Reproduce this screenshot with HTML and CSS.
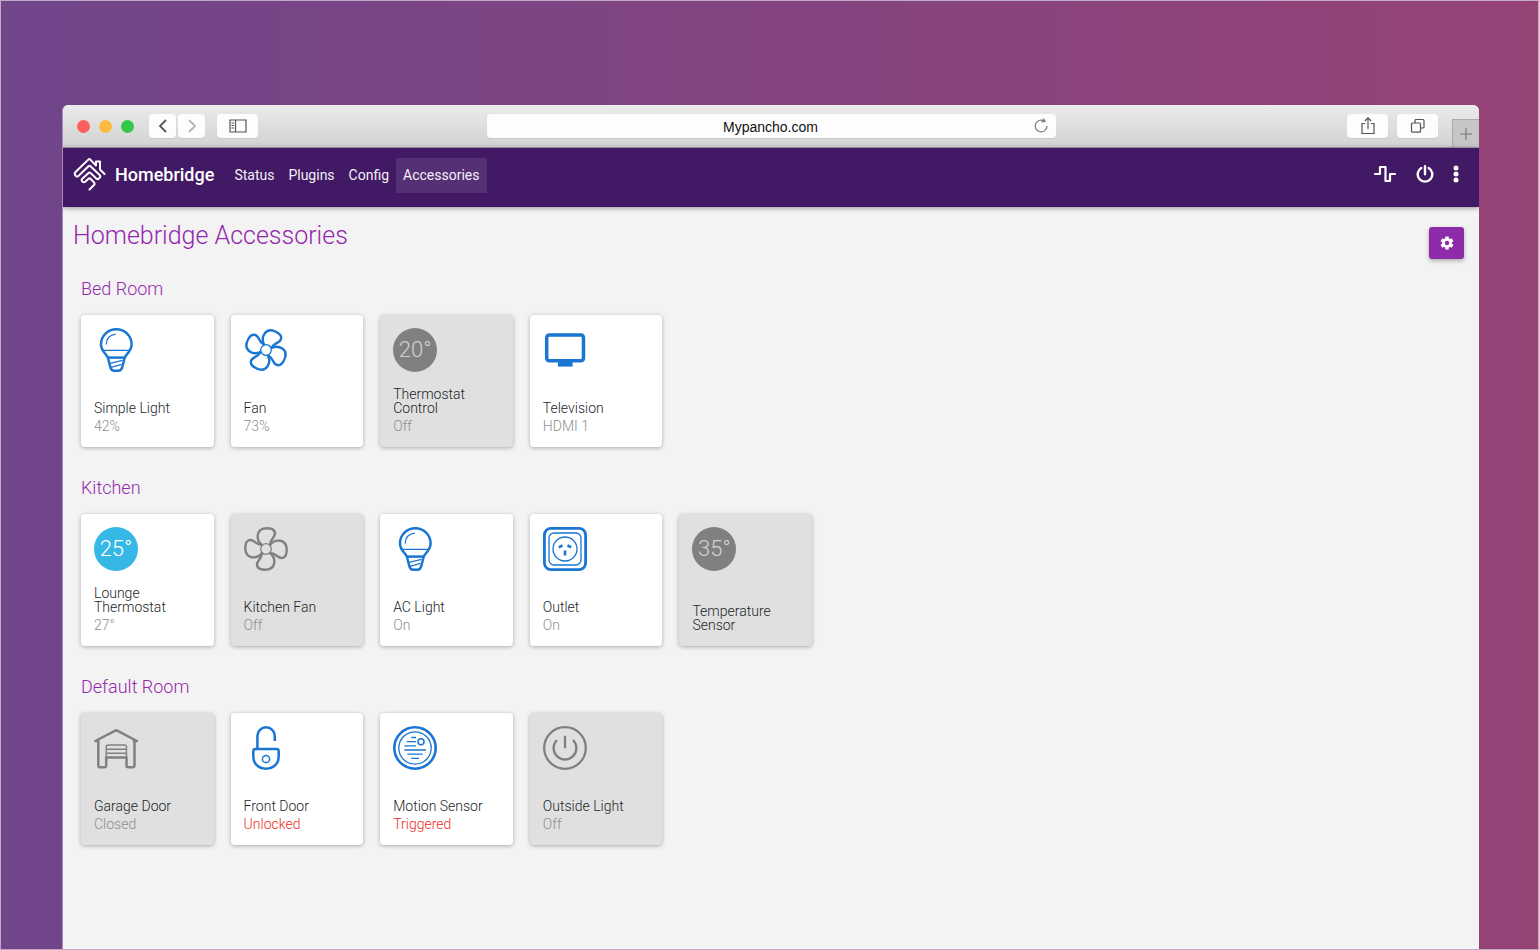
FILE: index.html
```html
<!DOCTYPE html>
<html lang="en">
<head>
<meta charset="utf-8">
<meta name="viewport" content="width=device-width, initial-scale=1">
<title>Homebridge Accessories</title>
<link rel="stylesheet" href="styles.css">
</head>
<body>
<svg class="defs" aria-hidden="true">
  <symbol id="bulb" viewBox="0 0 44 44"><g fill="none" stroke="currentColor" stroke-width="2.500" stroke-linejoin="round"><path d="M13.800 29.300C11.500 25 7 22.500 7 16.400a15.300 15.200 0 0 1 30.600 0c0 6.100-4.500 8.600-6.800 12.900L28.300 39q-.8 3.700-4 3.700h-4q-3.200 0-4-3.700z"/><path d="M14 29.600h16.600"/><path d="M7.500 22.300h29.500M12.300 16.500c0-5.500 3.500-9.500 9.500-10.300M16 35.300l12.500-3M17 39.300l10.500-3" stroke-width="1.300"/></g></symbol>
  <symbol id="fan" viewBox="0 0 44 44"><g fill="none" stroke="currentColor" stroke-width="2.400"><path id="blade" d="M18.300 18.200C11.500 13 11.500 1.300 23 1.300C31.500 1.300 32.500 6.500 29.300 10.500C27 13.300 26.200 14.500 25.900 18"/><use href="#blade" transform="rotate(90 22 22)"/><use href="#blade" transform="rotate(180 22 22)"/><use href="#blade" transform="rotate(270 22 22)"/><circle cx="22" cy="22" r="5.300" stroke-width="1.300"/></g></symbol>
  <symbol id="tv" viewBox="0 0 44 44"><rect x="3.700" y="7" width="36.800" height="25.800" rx="2.500" fill="none" stroke="currentColor" stroke-width="3.500"/><path d="M15 33h14.600v5.600H15z" fill="currentColor"/></symbol>
  <symbol id="outlet" viewBox="0 0 44 44"><g fill="none" stroke="currentColor" stroke-width="1.300"><rect x="1.400" y="1.400" width="41.200" height="41.200" rx="6.500" stroke-width="2.800"/><rect x="6" y="6" width="32" height="32" rx="5"/><circle cx="22" cy="22" r="12"/><path d="M15.800 20.300l3.700-2M28.200 20.300l-3.700-2M22 23.500v5" stroke-width="2.600"/></g></symbol>
  <symbol id="garage" viewBox="0 0 44 44"><g fill="none" stroke="currentColor" stroke-width="2.500" stroke-linejoin="round" stroke-linecap="round"><path d="M1.300 15L22.300 4.200l20.600 10.800M1.300 15h3M42.900 15h-3M4.300 15v24.500q0 1.800 1.800 1.800h4.200q1.900 0 1.900-1.800V31.500h20.300v8q0 1.800 1.800 1.800h4.400q1.800 0 1.800-1.800V15"/><path d="M12.200 31v-10q0-2 2-2h16.300q2 0 2 2v10M12.500 23.200h20M12.500 27.200h20" stroke-width="1.400"/></g></symbol>
  <symbol id="lock" viewBox="0 0 44 44"><g fill="none" stroke="currentColor" stroke-width="2.500" stroke-linejoin="round"><path d="M13.400 23V10a8.700 8.700 0 0 1 17.400 0v5"/><path d="M11.500 23h21q2.200 0 2.200 2.200v5.300c0 7-5 12.200-12.700 12.200S9.300 37.500 9.300 30.500v-5.300q0-2.200 2.200-2.200z"/><circle cx="22" cy="33" r="3.600" stroke-width="1.500"/></g></symbol>
  <symbol id="motion" viewBox="0 0 44 44"><g fill="none" stroke="currentColor" stroke-width="1.300"><circle cx="22" cy="22" r="20.700" stroke-width="2.600"/><circle cx="22" cy="22" r="16.200"/><circle cx="28" cy="15.800" r="3" stroke-width="1.500"/><path d="M18.300 11.500h4.700M13.700 15.700H23M11.300 19.800H23M11.300 24h21.700M14.300 28.200h15.400M18.300 32.400h7.700"/></g></symbol>
  <symbol id="power" viewBox="0 0 44 44"><g fill="none" stroke="currentColor" stroke-width="2.300"><circle cx="22" cy="22" r="20.800"/><path d="M22 9.700v12.500M14 14a11.400 11.400 0 1 0 16 0"/></g></symbol>
</svg>

<div class="window">
  <header class="chrome">
    <div class="chrome-side">
      <div class="lights"><i class="light red"></i><i class="light amber"></i><i class="light green"></i></div>
      <div class="history">
        <button class="tool narrow" aria-label="Back"><svg width="14" height="16" viewBox="0 0 14 16"><path d="M10 2L4 8l6 6" fill="none" stroke="#555" stroke-width="1.800"/></svg></button>
        <button class="tool narrow" aria-label="Forward"><svg width="14" height="16" viewBox="0 0 14 16"><path d="M4 2l6 6-6 6" fill="none" stroke="#b4b4b4" stroke-width="1.800"/></svg></button>
      </div>
      <button class="tool" aria-label="Sidebar"><svg width="18" height="14" viewBox="0 0 18 14"><path d="M1 1h16v12H1zM6.500 1v12M2.500 4h2.500M2.500 6.500h2.500M2.500 9h2.500" fill="none" stroke="#555" stroke-width="1.200"/></svg></button>
    </div>
    <div class="address">
      <input class="address-input" type="text" value="Mypancho.com" aria-label="Address">
      <button class="reload" aria-label="Reload"><svg width="16" height="16" viewBox="0 0 16 16"><path d="M11.800 3.400A5.900 5.900 0 1 0 14 8M8.500 3.800l3.500-.3L10.500.5" fill="none" stroke="#777" stroke-width="1.200"/></svg></button>
    </div>
    <div class="chrome-side end">
      <button class="tool" aria-label="Share"><svg width="16" height="20" viewBox="0 0 16 20"><path d="M5 7.500H2v10h12v-10h-3M8 13V2M4.800 5L8 1.800 11.200 5" fill="none" stroke="#555" stroke-width="1.200"/></svg></button>
      <button class="tool" aria-label="Tabs"><svg width="16" height="16" viewBox="0 0 16 16"><path d="M5 5V2.500q0-1 1-1h7q1 0 1 1v6.500q0 1-1 1h-2M2.500 5h7q1 0 1 1v7.200q0 1-1 1h-7q-1 0-1-1V6q0-1 1-1z" fill="none" stroke="#555" stroke-width="1.200"/></svg></button>
      <button class="new-tab" aria-label="New tab"><svg width="14" height="14" viewBox="0 0 14 14"><path d="M7 1v12M1 7h12" stroke="#777" stroke-width="1.200"/></svg></button>
    </div>
  </header>

  <nav class="navbar">
    <a class="brand" href="#"><svg width="34" height="34" viewBox="0 0 34 34" aria-hidden="true"><path d="M31.500 17L27 12.500V4.500h-4v4L17.300 2.600q-1-1-2 0L2.300 15.300q-1.300 1.500 0 3l.6.6q1.300 1.200 2.600 0L15.500 9.200q1-.9 2 0l9.200 8.800q1.200 1.300 0 2.600l-.8.9q-1.300 1.200-2.600 0l-5.800-5.600q-1-.9-2 0l-6.200 5.800q-1.200 1.300-.2 2.500l.6.600q1.200 1 2.500 0l3.300-3q1-.9 2 0l3.500 3.600q1.200 1.300 0 2.600L16.500 32.500" fill="none" stroke="#fff" stroke-width="2" stroke-linecap="round" stroke-linejoin="round"/></svg>Homebridge</a>
    <div class="links">
      <a class="link" href="#">Status</a>
      <a class="link" href="#">Plugins</a>
      <a class="link" href="#">Config</a>
      <a class="link active" href="#" aria-current="page">Accessories</a>
    </div>
    <div class="nav-actions">
      <a href="#" aria-label="Logs"><svg width="24" height="18" viewBox="0 0 24 18"><path d="M2 9H7V2H12.500V16H17V9h5" fill="none" stroke="#fff" stroke-width="2.200" stroke-linecap="round" stroke-linejoin="round"/></svg></a>
      <a href="#" aria-label="Restart"><svg width="18" height="18" viewBox="0 0 18 18"><path d="M9 1.200v8M5.300 3A7.300 7.300 0 1 0 12.700 3" fill="none" stroke="#fff" stroke-width="2.400" stroke-linecap="round"/></svg></a>
      <a href="#" aria-label="Menu"><svg width="6" height="18" viewBox="0 0 6 18" fill="#fff"><circle cx="3" cy="3" r="2.500"/><circle cx="3" cy="9" r="2.500"/><circle cx="3" cy="15" r="2.500"/></svg></a>
    </div>
  </nav>

  <main class="content">
    <div class="heading">
      <h1>Homebridge Accessories</h1>
      <button class="settings" aria-label="Settings"><svg width="14" height="14" viewBox="0 0 14 14"><g stroke="#fff" stroke-width="3.400"><path d="M7 .5v13M1.400 3.750l11.200 6.500M1.400 10.250l11.200-6.500"/></g><circle cx="7" cy="7" r="4.900" fill="#fff"/><circle cx="7" cy="7" r="2.200" fill="#8e2ba8"/></svg></button>
    </div>

    <section class="room">
      <h2>Bed Room</h2>
      <div class="cards">
        <article class="card"><svg class="icon"><use href="#bulb"/></svg><div><h3>Simple Light</h3><p>42%</p></div></article>
        <article class="card"><svg class="icon spun"><use href="#fan"/></svg><div><h3>Fan</h3><p>73%</p></div></article>
        <article class="card off"><span class="temp">20°</span><div><h3>Thermostat Control</h3><p>Off</p></div></article>
        <article class="card"><svg class="icon"><use href="#tv"/></svg><div><h3>Television</h3><p>HDMI 1</p></div></article>
      </div>
    </section>

    <section class="room">
      <h2>Kitchen</h2>
      <div class="cards">
        <article class="card"><span class="temp">25°</span><div><h3>Lounge Thermostat</h3><p>27°</p></div></article>
        <article class="card off"><svg class="icon"><use href="#fan"/></svg><div><h3>Kitchen Fan</h3><p>Off</p></div></article>
        <article class="card"><svg class="icon"><use href="#bulb"/></svg><div><h3>AC Light</h3><p>On</p></div></article>
        <article class="card"><svg class="icon"><use href="#outlet"/></svg><div><h3>Outlet</h3><p>On</p></div></article>
        <article class="card off"><span class="temp">35°</span><div><h3>Temperature Sensor</h3></div></article>
      </div>
    </section>

    <section class="room">
      <h2>Default Room</h2>
      <div class="cards">
        <article class="card off"><svg class="icon"><use href="#garage"/></svg><div><h3>Garage Door</h3><p>Closed</p></div></article>
        <article class="card"><svg class="icon"><use href="#lock"/></svg><div><h3>Front Door</h3><p class="alert">Unlocked</p></div></article>
        <article class="card"><svg class="icon"><use href="#motion"/></svg><div><h3>Motion Sensor</h3><p class="alert">Triggered</p></div></article>
        <article class="card off"><svg class="icon"><use href="#power"/></svg><div><h3>Outside Light</h3><p>Off</p></div></article>
      </div>
    </section>
  </main>
</div>
</body>
</html>
```
FILE: styles.css
```css
* { box-sizing: border-box; }

body {
  margin: 0;
  min-height: 100vh;
  padding: 104px 59px 0 61px;
  display: flex;
  flex-direction: column;
  border: 1px solid #c1a9c9;
  background: linear-gradient(90deg, #70458a, #964376);
  font-family: Roboto, "Liberation Sans", sans-serif;
  font-weight: 300;
}

h1, h2, h3, p { margin: 0; font-weight: 300; }
a { color: inherit; text-decoration: none; }
button { padding: 0; border: 0; font: inherit; cursor: pointer; }
svg { display: block; }
.defs { position: absolute; width: 0; height: 0; }

.window {
  flex: 1;
  display: flex;
  flex-direction: column;
  border-left: 1px solid #a98bb8;
  border-radius: 6px 6px 0 0;
  background: #f3f3f3;
  overflow: hidden;
}

/* Browser toolbar */
.chrome {
  display: grid;
  grid-template-columns: 1fr minmax(200px, 569px) 1fr;
  align-items: center;
  height: 43px;
  background: linear-gradient(#ebebeb, #d2d2d2);
  border-bottom: 1px solid #a898b0;
}
.chrome-side { display: flex; align-items: center; height: 100%; padding-left: 14px; }
.chrome-side.end { justify-content: flex-end; gap: 9px; padding-left: 0; }
.lights { display: flex; gap: 9px; margin-right: 15px; }
.light { width: 13px; height: 13px; border-radius: 50%; }
.red { background: #fb605c; }
.amber { background: #fcbb40; }
.green { background: #34c84a; }
.history { display: flex; gap: 2px; margin-right: 12px; }
.tool {
  display: grid;
  place-items: center;
  width: 41px;
  height: 24px;
  border-radius: 4px;
  background: #fdfdfd;
  box-shadow: 0 1px 1px #c8c8c8;
}
.tool.narrow { width: 27px; }
.address {
  display: flex;
  align-items: center;
  height: 24px;
  padding-right: 7px;
  border-radius: 4px;
  background: #fdfdfd;
  box-shadow: 0 1px 1px #c8c8c8;
}
.address-input {
  flex: 1;
  min-width: 0;
  padding: 2px 0 0 22px;
  border: 0;
  background: none;
  color: #111;
  font: 14px "Liberation Sans", Arial, sans-serif;
  text-align: center;
}
.reload { background: none; }
.new-tab {
  align-self: flex-end;
  display: grid;
  place-items: center;
  width: 27px;
  height: 28px;
  margin-left: 5px;
  border: 1px solid #aaa;
  border-width: 1px 0 0 1px;
  background: #c6c6c6;
}

/* Navigation */
.navbar {
  display: flex;
  align-items: center;
  min-height: 59px;
  padding: 0 20px 7px 10px;
  background: #421965;
  color: #f4eff7;
  font-size: 14px;
  box-shadow: 0 1px 5px rgba(0, 0, 0, .4);
}
.brand {
  display: flex;
  align-items: center;
  gap: 8px;
  margin-right: 13px;
  color: #fff;
  font-size: 18px;
  font-weight: 500;
}
.links { display: flex; padding-top: 3px; }
.link { padding: 0 7px; line-height: 35px; font-weight: 400; }
.link.active { background: #553075; }
.nav-actions { display: flex; align-items: center; gap: 19px; margin-left: auto; }

/* Page */
.content { padding: 13px 15px 24px 10px; }
.heading { display: flex; justify-content: space-between; height: 51px; color: #9428ad; }
h1 { font-size: 25px; line-height: 32px; }
.settings {
  display: grid;
  place-items: center;
  width: 35px;
  height: 32px;
  margin-top: 7px;
  border-radius: 3px;
  background: #8e2ba8;
  box-shadow: 0 2px 4px rgba(0, 0, 0, .3);
}
.room { padding-left: 8px; margin-bottom: 23px; }
h2 { margin-bottom: 8px; padding: 6px 0; color: #9428ad; font-size: 18px; line-height: 24px; }
.cards {
  display: grid;
  grid-template-columns: repeat(5, 1fr);
  gap: 17px;
  max-width: 731px;
}
.card {
  display: flex;
  flex-direction: column;
  justify-content: space-between;
  min-height: 132px;
  padding: 13px 13px 12px;
  border-radius: 4px;
  background: #fff;
  color: #1976d2;
  box-shadow: 0 1px 4px rgba(0, 0, 0, .3);
}
.card.off { background: #e0e0e0; color: #808080; }
.icon { width: 44px; height: 44px; }
.icon.spun { transform: rotate(25deg); }
.temp {
  width: 44px;
  height: 44px;
  border-radius: 50%;
  background: #35b8e6;
  color: #fff;
  font-size: 22px;
  line-height: 44px;
  text-align: center;
}
.off .temp { background: #808080; color: #d2d2d2; }
h3 { margin-bottom: 2px; color: #212529; font-size: 14px; line-height: 14px; }
.card p { color: #8e8e8e; font-size: 14px; line-height: 18px; }
.card .alert { color: #f02c20; }
```
